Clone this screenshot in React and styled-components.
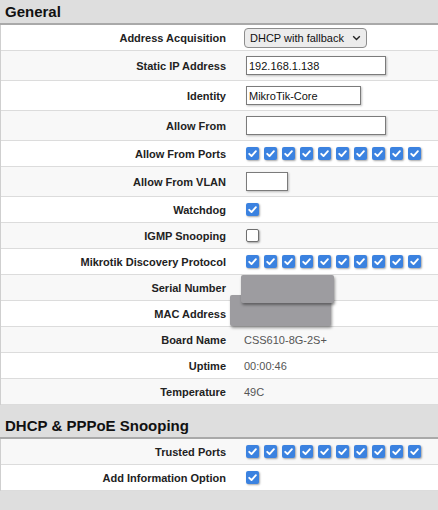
import React from "react";
import styled, { createGlobalStyle } from "styled-components";

const Global = createGlobalStyle`
  html, body {
    margin: 0;
    padding: 0;
    background: #dedede;
    font-family: "Liberation Sans", Arial, sans-serif;
  }
`;

const Page = styled.div`
  width: 438px;
  height: 510px;
  background: #dedede;
  overflow: hidden;
`;

const Heading = styled.h2`
  margin: 0;
  padding: ${({ first }) => (first ? "3px 5px 3px" : "12px 5px 3px")};
  font-size: 15px;
  line-height: 17px;
  font-weight: bold;
  color: #111;
  border-bottom: 2px solid #a9a9a9;
`;

const Table = styled.div`
  border-left: 1px solid #cfcfcf;
  background: #fff;
`;

const Row = styled.div`
  display: grid;
  grid-template-columns: 232px 1fr;
  align-items: center;
  min-height: ${({ tall }) => (tall ? "29px" : "25px")};
  background: ${({ shade }) => (shade ? "#f8f8f8" : "#fff")};
  border-bottom: 1px solid #dcdcdc;
`;

const Label = styled.div`
  text-align: right;
  padding-right: 7px;
  font-size: 11px;
  font-weight: bold;
  color: #222;
`;

const Value = styled.div`
  position: relative;
  display: flex;
  align-items: center;
  gap: 5px;
  padding-left: 11px;
  font-size: 11px;
  color: #555;
  height: 100%;
`;

const Select = styled.div`
  display: flex;
  align-items: center;
  gap: 8px;
  height: 18px;
  padding: 0 5px;
  border: 1px solid #8d8d8d;
  border-radius: 4px;
  background: #ececec;
  font-size: 11px;
  color: #111;
`;

const Input = styled.input`
  box-sizing: border-box;
  width: ${({ w }) => w}px;
  height: 19px;
  margin: 0 0 0 2px;
  padding: 0 2px;
  border: 1px solid #7b7b7b;
  box-shadow: 1px 1px 2px rgba(0, 0, 0, 0.25);
  font-family: "Liberation Sans", Arial, sans-serif;
  font-size: 11px;
  color: #111;
  background: #fff;
  outline: none;
`;

const Boxes = styled.div`
  display: flex;
  gap: 5px;
  margin-left: 2px;
`;

const Box = styled.span`
  box-sizing: border-box;
  width: 13px;
  height: 13px;
  display: inline-flex;
  align-items: center;
  justify-content: center;
  border-radius: 2px;
  background: ${({ on }) => (on ? "#3b82e0" : "#fff")};
  border: ${({ on }) => (on ? "none" : "1.5px solid #6f6f6f")};
  box-shadow: 1px 1px 2px rgba(0, 0, 0, 0.35);
`;

const Redact = styled.div`
  position: absolute;
  left: ${({ x }) => x}px;
  top: ${({ y }) => y}px;
  width: ${({ w }) => w}px;
  height: ${({ h }) => h}px;
  background: #9d9ca0;
  border-radius: 2px;
  box-shadow: 1px 2px 3px rgba(0, 0, 0, 0.4);
  z-index: ${({ z }) => z};
`;

function Check({ on = true }) {
  return (
    <Box on={on}>
      {on && (
        <svg width="11" height="11" viewBox="0 0 10 10">
          <path d="M2 5.3 L4.1 7.3 L8.1 2.9" fill="none" stroke="#fff" strokeWidth="1.7" strokeLinecap="round" strokeLinejoin="round" />
        </svg>
      )}
    </Box>
  );
}

function Ports() {
  return (
    <Boxes>
      {Array.from({ length: 10 }).map((_, i) => (
        <Check key={i} />
      ))}
    </Boxes>
  );
}

function Chevron() {
  return (
    <svg width="9" height="6" viewBox="0 0 9 6">
      <path d="M1.2 1.2 L4.5 4.4 L7.8 1.2" fill="none" stroke="#222" strokeWidth="1.4" />
    </svg>
  );
}

export default function App() {
  return (
    <Page>
      <Global />
      <Heading first>General</Heading>
      <Table>
        <Row>
          <Label>Address Acquisition</Label>
          <Value>
            <Select>
              DHCP with fallback <Chevron />
            </Select>
          </Value>
        </Row>
        <Row tall shade>
          <Label>Static IP Address</Label>
          <Value>
            <Input w={140} defaultValue="192.168.1.138" />
          </Value>
        </Row>
        <Row tall>
          <Label>Identity</Label>
          <Value>
            <Input w={115} defaultValue="MikroTik-Core" />
          </Value>
        </Row>
        <Row tall shade>
          <Label>Allow From</Label>
          <Value>
            <Input w={140} defaultValue="" />
          </Value>
        </Row>
        <Row>
          <Label>Allow From Ports</Label>
          <Value>
            <Ports />
          </Value>
        </Row>
        <Row tall shade>
          <Label>Allow From VLAN</Label>
          <Value>
            <Input w={42} defaultValue="" />
          </Value>
        </Row>
        <Row>
          <Label>Watchdog</Label>
          <Value>
            <Boxes>
              <Check />
            </Boxes>
          </Value>
        </Row>
        <Row shade>
          <Label>IGMP Snooping</Label>
          <Value>
            <Boxes>
              <Check on={false} />
            </Boxes>
          </Value>
        </Row>
        <Row>
          <Label>Mikrotik Discovery Protocol</Label>
          <Value>
            <Ports />
          </Value>
        </Row>
        <Row shade>
          <Label>Serial Number</Label>
          <Value>
            <Redact x={8} y={0} w={93} h={28} z={2} />
          </Value>
        </Row>
        <Row>
          <Label>MAC Address</Label>
          <Value>
            <Redact x={-3} y={-6} w={101} h={31} z={1} />
          </Value>
        </Row>
        <Row shade>
          <Label>Board Name</Label>
          <Value>CSS610-8G-2S+</Value>
        </Row>
        <Row>
          <Label>Uptime</Label>
          <Value>00:00:46</Value>
        </Row>
        <Row shade>
          <Label>Temperature</Label>
          <Value>49C</Value>
        </Row>
      </Table>
      <Heading>DHCP &amp; PPPoE Snooping</Heading>
      <Table>
        <Row shade>
          <Label>Trusted Ports</Label>
          <Value>
            <Ports />
          </Value>
        </Row>
        <Row>
          <Label>Add Information Option</Label>
          <Value>
            <Boxes>
              <Check />
            </Boxes>
          </Value>
        </Row>
      </Table>
    </Page>
  );
}
